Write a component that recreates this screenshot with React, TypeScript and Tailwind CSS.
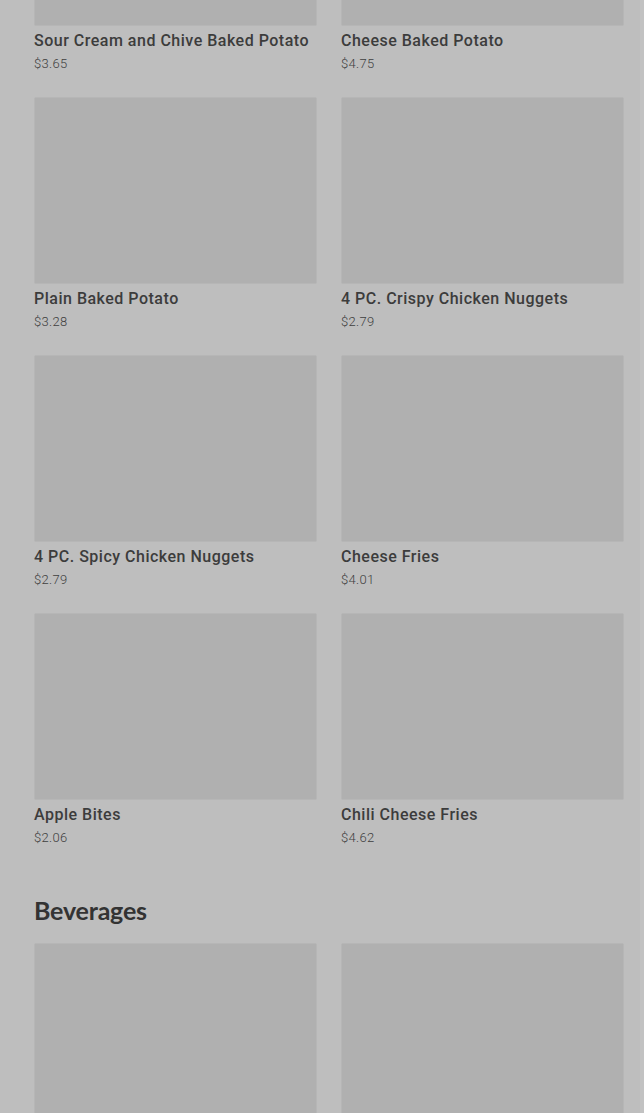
import React from "react";

type Item = { name: string; price: string };

const sides: Item[] = [
  { name: "Sour Cream and Chive Baked Potato", price: "$3.65" },
  { name: "Cheese Baked Potato", price: "$4.75" },
  { name: "Plain Baked Potato", price: "$3.28" },
  { name: "4 PC. Crispy Chicken Nuggets", price: "$2.79" },
  { name: "4 PC. Spicy Chicken Nuggets", price: "$2.79" },
  { name: "Cheese Fries", price: "$4.01" },
  { name: "Apple Bites", price: "$2.06" },
  { name: "Chili Cheese Fries", price: "$4.62" },
];

function Thumb() {
  return <div className="h-[187px] bg-[#b0b0b0] border border-[#b6b6b6] rounded-[2px]" />;
}

function Card({ item }: { item: Item }) {
  return (
    <div className="flex flex-col">
      <Thumb />
      <div className="mt-[3px] text-[16px] leading-6 font-medium text-[#3c3c3c] tracking-[0.5px] whitespace-nowrap">
        {item.name}
      </div>
      <div className="mt-[2px] text-[13px] leading-[18px] font-light text-[#3e3e3e] tracking-[0.3px]">
        {item.price}
      </div>
    </div>
  );
}

export default function App() {
  return (
    <div
      className="flex h-[1113px] overflow-hidden bg-[#bebebe]"
      style={{ fontFamily: "Roboto, 'Noto Sans', sans-serif" }}
    >
      <div className="flex-1 pl-[34px] pr-[16px]">
        {/* list is scrolled, first row partly hidden */}
        <div className="-mt-[161px] grid grid-cols-2 gap-x-[24px] gap-y-[24px]">
          {sides.map((it) => (
            <Card key={it.name} item={it} />
          ))}
        </div>

        <h2
          className="mt-[47px] mb-[17px] text-[25px] leading-8 font-bold text-[#333333] tracking-[-0.2px]"
          style={{ fontFamily: "Lato, Inter, sans-serif" }}
        >
          Beverages
        </h2>

        {/* beverages, only the pictures show above the fold */}
        <div className="grid grid-cols-2 gap-x-[24px]">
          <Thumb />
          <Thumb />
        </div>
      </div>
      <div className="w-[4px] bg-[#c2c2c2]" />
    </div>
  );
}
